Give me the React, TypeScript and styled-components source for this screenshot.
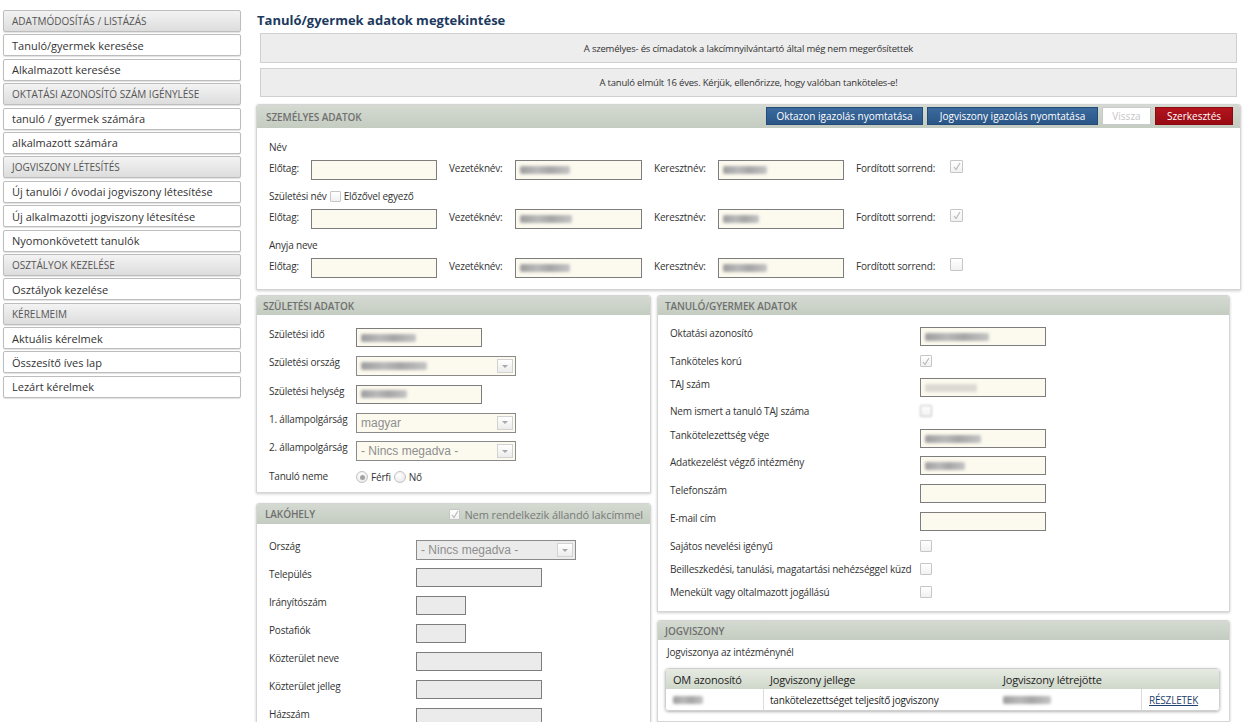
import React from "react";
import styled, { createGlobalStyle, css } from "styled-components";

const GlobalStyle = createGlobalStyle`
  html, body { margin: 0; padding: 0; background: #fff; }
  body {
    font-family: "Open Sans", "DejaVu Sans", sans-serif;
    font-size: 10px;
    letter-spacing: -0.2px;
    color: #333;
  }
  * { box-sizing: border-box; }
`;

const Page = styled.div`
  display: flex;
  align-items: flex-start;
  width: 1254px;
  height: 722px;
  overflow: hidden;
`;

/* ---------- sidebar ---------- */
const Sidebar = styled.nav`
  flex: none;
  width: 241px;
  padding: 10px 0 0 3px;
  display: flex;
  flex-direction: column;
  gap: 2.4px;
  letter-spacing: 0;
`;

const NavItem = styled.div<{ $head?: boolean }>`
  height: 22px;
  display: flex;
  align-items: center;
  padding-left: 8px;
  border: 1px solid #bdbdbd;
  border-radius: 2px;
  box-shadow: 0 1px 1px rgba(0, 0, 0, 0.12);
  background: #fff;
  font-size: 11px;
  color: #333;
  white-space: nowrap;
  ${(p) =>
    p.$head &&
    css`
      background: linear-gradient(#f3f3f3, #dddddd);
      font-size: 10px;
      color: #555;
    `}
`;

/* ---------- main ---------- */
const Main = styled.main`
  margin-left: 15px;
  width: 985px;
  padding-top: 11px;
`;

const Title = styled.h1`
  margin: 0 0 4px 1px;
  font-size: 13px;
  line-height: 18px;
  font-weight: 700;
  color: #1c3a5e;
  letter-spacing: 0;
`;

const Notice = styled.div<{ $h: number; $mb: number }>`
  margin: 0 4px ${(p) => p.$mb}px;
  height: ${(p) => p.$h}px;
  display: flex;
  align-items: center;
  justify-content: center;
  background: #ededed;
  border: 1px solid #d0d0d0;
  font-size: 9.5px;
  letter-spacing: -0.2px;
  color: #333;
`;

const Panel = styled.section`
  background: #fff;
  border: 1px solid #d5d5d5;
  border-radius: 3px 3px 0 0;
  box-shadow: 0 1px 3px rgba(0, 0, 0, 0.2);
`;

const PanelHead = styled.div<{ $h: number; $pl: number }>`
  height: ${(p) => p.$h}px;
  display: flex;
  align-items: center;
  justify-content: space-between;
  padding: 0 7px 0 ${(p) => p.$pl}px;
  background: linear-gradient(#d4dad1, #c4ccc1);
  border-radius: 2px 2px 0 0;
`;

const PanelTitle = styled.span`
  font-size: 10px;
  font-weight: 600;
  color: #707070;
  text-transform: uppercase;
  letter-spacing: -0.1px;
`;

const HeadButtons = styled.div`
  display: flex;
  gap: 4px;
  align-self: flex-start;
  margin-top: 2px;
`;

const Btn = styled.button<{ $tone: "blue" | "red" | "ghost"; $w: number }>`
  width: ${(p) => p.$w}px;
  height: 18px;
  padding: 0;
  font-family: inherit;
  font-size: 10px;
  letter-spacing: 0;
  color: #fff;
  border: 1px solid #244a77;
  background: linear-gradient(#3b6a9d, #2b5687);
  ${(p) =>
    p.$tone === "red" &&
    css`
      border-color: #8a0a10;
      background: linear-gradient(#b3141d, #980b13);
    `}
  ${(p) =>
    p.$tone === "ghost" &&
    css`
      border-color: #cacaca;
      background: #fff;
      color: #c6c6c6;
    `}
`;

const PersonalBody = styled.div`
  padding: 12px 12px 11px;
  display: flex;
  flex-direction: column;
`;

const GroupLabel = styled.div`
  height: 14px;
  display: flex;
  align-items: center;
  gap: 3px;
  margin-bottom: 6px;
`;

const NameGrid = styled.div`
  display: grid;
  grid-template-columns: 42px 138px 66px 139px 64px 138px 94px 13px;
  align-items: start;
  margin-bottom: 9px;
  &:last-child {
    margin-bottom: 0;
  }
`;

const CellLabel = styled.div`
  padding-top: 1px;
  line-height: 14px;
  white-space: nowrap;
`;

const Field = styled.div<{ $w: number; $h?: number; $off?: boolean }>`
  width: ${(p) => p.$w}px;
  height: ${(p) => p.$h ?? 19}px;
  border: 1px solid #7d7d7d;
  background: ${(p) => (p.$off ? "#ebebeb" : "#fcfaef")};
  display: flex;
  align-items: center;
  padding: 0 4px;
`;

const SelectBox = styled.div<{ $w: number; $off?: boolean }>`
  width: ${(p) => p.$w}px;
  height: 20px;
  border: 1px solid #8a8a8a;
  background: ${(p) => (p.$off ? "#ebebeb" : "#fcfaef")};
  display: flex;
  align-items: center;
  justify-content: space-between;
  padding: 0 2px 0 4px;
  font-family: "Liberation Sans", Arial, sans-serif;
  font-size: 12px;
  letter-spacing: 0;
  color: #8e8e8e;
`;

const SelectArrow = styled.span`
  width: 16px;
  height: 14px;
  border: 1px solid #d2d2d2;
  background: linear-gradient(#ffffff, #ececec);
  display: flex;
  align-items: center;
  justify-content: center;
  &::after {
    content: "";
    border-left: 3px solid transparent;
    border-right: 3px solid transparent;
    border-top: 3px solid #a8a8a8;
  }
`;

const Blur = styled.span<{ $w: number; $light?: boolean }>`
  display: inline-block;
  width: ${(p) => p.$w}px;
  height: 8px;
  background: ${(p) =>
    p.$light
      ? "#dcd9d2"
      : "linear-gradient(90deg, #9d9d9d 0%, #b9b9b9 35%, #a5a5a5 60%, #c4c4c4 100%)"};
  filter: blur(1.5px);
  border-radius: 2px;
`;

const CheckBox = styled.span<{ $size?: number; $fuzzy?: boolean }>`
  display: inline-flex;
  align-items: center;
  justify-content: center;
  flex: none;
  width: ${(p) => p.$size ?? 13}px;
  height: ${(p) => p.$size ?? 13}px;
  border: 1px solid #c6c6c6;
  background: linear-gradient(#ffffff, #f1f1f1);
  border-radius: 1px;
  ${(p) =>
    p.$fuzzy &&
    css`
      filter: blur(0.8px);
    `}
`;

const Check = ({ on, size, fuzzy }: { on?: boolean; size?: number; fuzzy?: boolean }) => (
  <CheckBox $size={size} $fuzzy={fuzzy}>
    {on && (
      <svg width="8" height="9" viewBox="0 0 8 9">
        <path d="M1 5 L3 7.5 L7 1" stroke="#b9b9b9" strokeWidth="1.2" fill="none" />
      </svg>
    )}
  </CheckBox>
);

const Radio = styled.span<{ $on?: boolean }>`
  display: inline-flex;
  align-items: center;
  justify-content: center;
  width: 12px;
  height: 12px;
  border-radius: 50%;
  border: 1px solid #c3c3c3;
  background: radial-gradient(circle at 40% 35%, #ffffff, #e4e4e4);
  ${(p) =>
    p.$on &&
    css`
      &::after {
        content: "";
        width: 5px;
        height: 5px;
        border-radius: 50%;
        background: #a3a3a3;
      }
    `}
`;

const Columns = styled.div`
  display: grid;
  grid-template-columns: 395px 573px;
  column-gap: 6px;
  margin-top: 5px;
  align-items: start;
`;

const Stack = styled.div<{ $gap: number }>`
  display: flex;
  flex-direction: column;
  gap: ${(p) => p.$gap}px;
`;

const FormBody = styled.div<{ $pt: number; $pb: number }>`
  padding: ${(p) => p.$pt}px 12px ${(p) => p.$pb}px;
`;

const FormRow = styled.div<{ $label: number; $h: number }>`
  display: grid;
  grid-template-columns: ${(p) => p.$label}px auto;
  justify-content: start;
  align-items: start;
  height: ${(p) => p.$h}px;
`;

const RowLabel = styled.div<{ $pt?: number }>`
  padding-top: ${(p) => p.$pt ?? 0}px;
  line-height: 12px;
  white-space: nowrap;
`;

const Inline = styled.div`
  display: flex;
  align-items: center;
  gap: 3px;
  padding-top: 2px;
  line-height: 12px;
`;

const HeadCheck = styled.label`
  display: flex;
  align-items: center;
  gap: 4px;
  font-size: 11px;
  letter-spacing: -0.1px;
  color: #7a7a7a;
`;

const JogBody = styled.div`
  padding: 6px 9px 10px 7px;
`;

const JogText = styled.div`
  line-height: 13px;
  margin-bottom: 9px;
  padding-left: 2px;
`;

const Table = styled.div`
  border: 1px solid #cfcfcf;
  border-radius: 4px;
  box-shadow: 0 1px 3px rgba(0, 0, 0, 0.3);
  overflow: hidden;
`;

const TRow = styled.div<{ $head?: boolean }>`
  display: grid;
  grid-template-columns: 97px 233px 145px auto;
  height: ${(p) => (p.$head ? 20 : 21)}px;
  font-size: ${(p) => (p.$head ? 11 : 10)}px;
  color: #222;
  background: ${(p) => (p.$head ? "linear-gradient(#e6ebe2, #cfd7ca)" : "#fff")};
`;

const TCell = styled.div<{ $sep?: boolean }>`
  display: flex;
  align-items: center;
  padding-left: 6px;
  border-left: 1px solid ${(p) => (p.$sep ? "#dcdcdc" : "transparent")};
  &:first-child {
    padding-left: 7px;
    border-left: none;
  }
`;

const Link = styled.a`
  color: #1f3f6e;
  text-decoration: underline;
  margin-left: 1px;
`;

type RowDef = {
  label: string;
  h: number;
  kind: "input" | "check" | "select" | "radio";
  w?: number;
  blur?: number;
  light?: boolean;
  on?: boolean;
  text?: string;
  off?: boolean;
  fuzzy?: boolean;
};

const renderField = (r: RowDef) => {
  if (r.kind === "input")
    return (
      <Field $w={r.w ?? 126} $off={r.off}>
        {r.blur ? <Blur $w={r.blur} $light={r.light} /> : null}
      </Field>
    );
  if (r.kind === "select")
    return (
      <SelectBox $w={r.w ?? 160} $off={r.off}>
        {r.blur ? <Blur $w={r.blur} /> : <span>{r.text}</span>}
        <SelectArrow />
      </SelectBox>
    );
  if (r.kind === "check") return <Check on={r.on} size={12} fuzzy={r.fuzzy} />;
  return (
    <Inline>
      <Radio $on />
      <span>Férfi</span>
      <Radio />
      <span>Nő</span>
    </Inline>
  );
};

const nav: { t: string; head?: boolean }[] = [
  { t: "ADATMÓDOSÍTÁS / LISTÁZÁS", head: true },
  { t: "Tanuló/gyermek keresése" },
  { t: "Alkalmazott keresése" },
  { t: "OKTATÁSI AZONOSÍTÓ SZÁM IGÉNYLÉSE", head: true },
  { t: "tanuló / gyermek számára" },
  { t: "alkalmazott számára" },
  { t: "JOGVISZONY LÉTESÍTÉS", head: true },
  { t: "Új tanulói / óvodai jogviszony létesítése" },
  { t: "Új alkalmazotti jogviszony létesítése" },
  { t: "Nyomonkövetett tanulók" },
  { t: "OSZTÁLYOK KEZELÉSE", head: true },
  { t: "Osztályok kezelése" },
  { t: "KÉRELMEIM", head: true },
  { t: "Aktuális kérelmek" },
  { t: "Összesítő íves lap" },
  { t: "Lezárt kérelmek" },
];

const nameGroups: { title: React.ReactNode; b1: number; b2: number; rev: boolean }[] = [
  { title: "Név", b1: 50, b2: 44, rev: true },
  {
    title: (
      <>
        <span>Születési név</span>
        <Check size={11} />
        <span>Előzővel egyező</span>
      </>
    ),
    b1: 52,
    b2: 36,
    rev: true,
  },
  { title: "Anyja neve", b1: 50, b2: 44, rev: false },
];

const born: RowDef[] = [
  { label: "Születési idő", h: 28.3, kind: "input", blur: 55 },
  { label: "Születési ország", h: 28.3, kind: "select", blur: 66 },
  { label: "Születési helység", h: 28.3, kind: "input", blur: 46 },
  { label: "1. állampolgárság", h: 28.3, kind: "select", text: "magyar" },
  { label: "2. állampolgárság", h: 28.3, kind: "select", text: "- Nincs megadva -" },
  { label: "Tanuló neme", h: 14, kind: "radio" },
];

const home: RowDef[] = [
  { label: "Ország", h: 28, kind: "select", text: "- Nincs megadva -", off: true },
  { label: "Település", h: 28, kind: "input", off: true },
  { label: "Irányítószám", h: 28, kind: "input", w: 50, off: true },
  { label: "Postafiók", h: 28, kind: "input", w: 50, off: true },
  { label: "Közterület neve", h: 28, kind: "input", off: true },
  { label: "Közterület jelleg", h: 28, kind: "input", off: true },
  { label: "Házszám", h: 28, kind: "input", off: true },
];

const child: RowDef[] = [
  { label: "Oktatási azonosító", h: 28, kind: "input", blur: 64 },
  { label: "Tanköteles korú", h: 23, kind: "check", on: true },
  { label: "TAJ szám", h: 27, kind: "input", blur: 52, light: true },
  { label: "Nem ismert a tanuló TAJ száma", h: 24, kind: "check", fuzzy: true },
  { label: "Tankötelezettség vége", h: 27, kind: "input", blur: 56 },
  { label: "Adatkezelést végző intézmény", h: 28, kind: "input", blur: 40 },
  { label: "Telefonszám", h: 28, kind: "input" },
  { label: "E-mail cím", h: 28, kind: "input" },
  { label: "Sajátos nevelési igényű", h: 23, kind: "check" },
  { label: "Beilleszkedési, tanulási, magatartási nehézséggel küzd", h: 23, kind: "check" },
  { label: "Menekült vagy oltalmazott jogállású", h: 23, kind: "check" },
];

export default function App() {
  return (
    <>
      <GlobalStyle />
      <Page>
        <Sidebar>
          {nav.map((n) => (
            <NavItem key={n.t} $head={n.head}>
              {n.t}
            </NavItem>
          ))}
        </Sidebar>

        <Main>
          <Title>Tanuló/gyermek adatok megtekintése</Title>
          <Notice $h={30} $mb={5}>
            A személyes- és címadatok a lakcímnyilvántartó által még nem megerősítettek
          </Notice>
          <Notice $h={29} $mb={7}>
            A tanuló elmúlt 16 éves. Kérjük, ellenőrizze, hogy valóban tanköteles-e!
          </Notice>

          <Panel>
            <PanelHead $h={23} $pl={9}>
              <PanelTitle>Személyes adatok</PanelTitle>
              <HeadButtons>
                <Btn $tone="blue" $w={157}>Oktazon igazolás nyomtatása</Btn>
                <Btn $tone="blue" $w={171}>Jogviszony igazolás nyomtatása</Btn>
                <Btn $tone="ghost" $w={49}>Vissza</Btn>
                <Btn $tone="red" $w={78}>Szerkesztés</Btn>
              </HeadButtons>
            </PanelHead>
            <PersonalBody>
              {nameGroups.map((g, i) => (
                <React.Fragment key={i}>
                  <GroupLabel>{g.title}</GroupLabel>
                  <NameGrid>
                    <CellLabel>Előtag:</CellLabel>
                    <Field $w={126} $h={20} />
                    <CellLabel>Vezetéknév:</CellLabel>
                    <Field $w={127} $h={20}>
                      <Blur $w={g.b1} />
                    </Field>
                    <CellLabel>Keresztnév:</CellLabel>
                    <Field $w={126} $h={20}>
                      <Blur $w={g.b2} />
                    </Field>
                    <CellLabel>Fordított sorrend:</CellLabel>
                    <Check on={g.rev} />
                  </NameGrid>
                </React.Fragment>
              ))}
            </PersonalBody>
          </Panel>

          <Columns>
            <Stack $gap={10}>
              <Panel>
                <PanelHead $h={19} $pl={6}>
                  <PanelTitle>Születési adatok</PanelTitle>
                </PanelHead>
                <FormBody $pt={13} $pb={9}>
                  {born.map((r) => (
                    <FormRow key={r.label} $label={87} $h={r.h}>
                      <RowLabel $pt={r.kind === "radio" ? 1 : 0}>{r.label}</RowLabel>
                      {renderField(r)}
                    </FormRow>
                  ))}
                </FormBody>
              </Panel>

              <Panel>
                <PanelHead $h={20} $pl={8}>
                  <PanelTitle>Lakóhely</PanelTitle>
                  <HeadCheck>
                    <Check on size={11} />
                    Nem rendelkezik állandó lakcímmel
                  </HeadCheck>
                </PanelHead>
                <FormBody $pt={16} $pb={10}>
                  {home.map((r) => (
                    <FormRow key={r.label} $label={147} $h={r.h}>
                      <RowLabel>{r.label}</RowLabel>
                      {renderField(r)}
                    </FormRow>
                  ))}
                </FormBody>
              </Panel>
            </Stack>

            <Stack $gap={8}>
              <Panel>
                <PanelHead $h={19} $pl={7}>
                  <PanelTitle>Tanuló/gyermek adatok</PanelTitle>
                </PanelHead>
                <FormBody $pt={12} $pb={2}>
                  {child.map((r) => (
                    <FormRow key={r.label} $label={250} $h={r.h}>
                      <RowLabel>{r.label}</RowLabel>
                      {renderField(r)}
                    </FormRow>
                  ))}
                </FormBody>
              </Panel>

              <Panel>
                <PanelHead $h={19} $pl={7}>
                  <PanelTitle>Jogviszony</PanelTitle>
                </PanelHead>
                <JogBody>
                  <JogText>Jogviszonya az intézménynél</JogText>
                  <Table>
                    <TRow $head>
                      <TCell>OM azonosító</TCell>
                      <TCell>Jogviszony jellege</TCell>
                      <TCell>Jogviszony létrejötte</TCell>
                      <TCell />
                    </TRow>
                    <TRow>
                      <TCell>
                        <Blur $w={30} />
                      </TCell>
                      <TCell $sep>tankötelezettséget teljesítő jogviszony</TCell>
                      <TCell>
                        <Blur $w={48} />
                      </TCell>
                      <TCell $sep>
                        <Link>RÉSZLETEK</Link>
                      </TCell>
                    </TRow>
                  </Table>
                </JogBody>
              </Panel>
            </Stack>
          </Columns>
        </Main>
      </Page>
    </>
  );
}
